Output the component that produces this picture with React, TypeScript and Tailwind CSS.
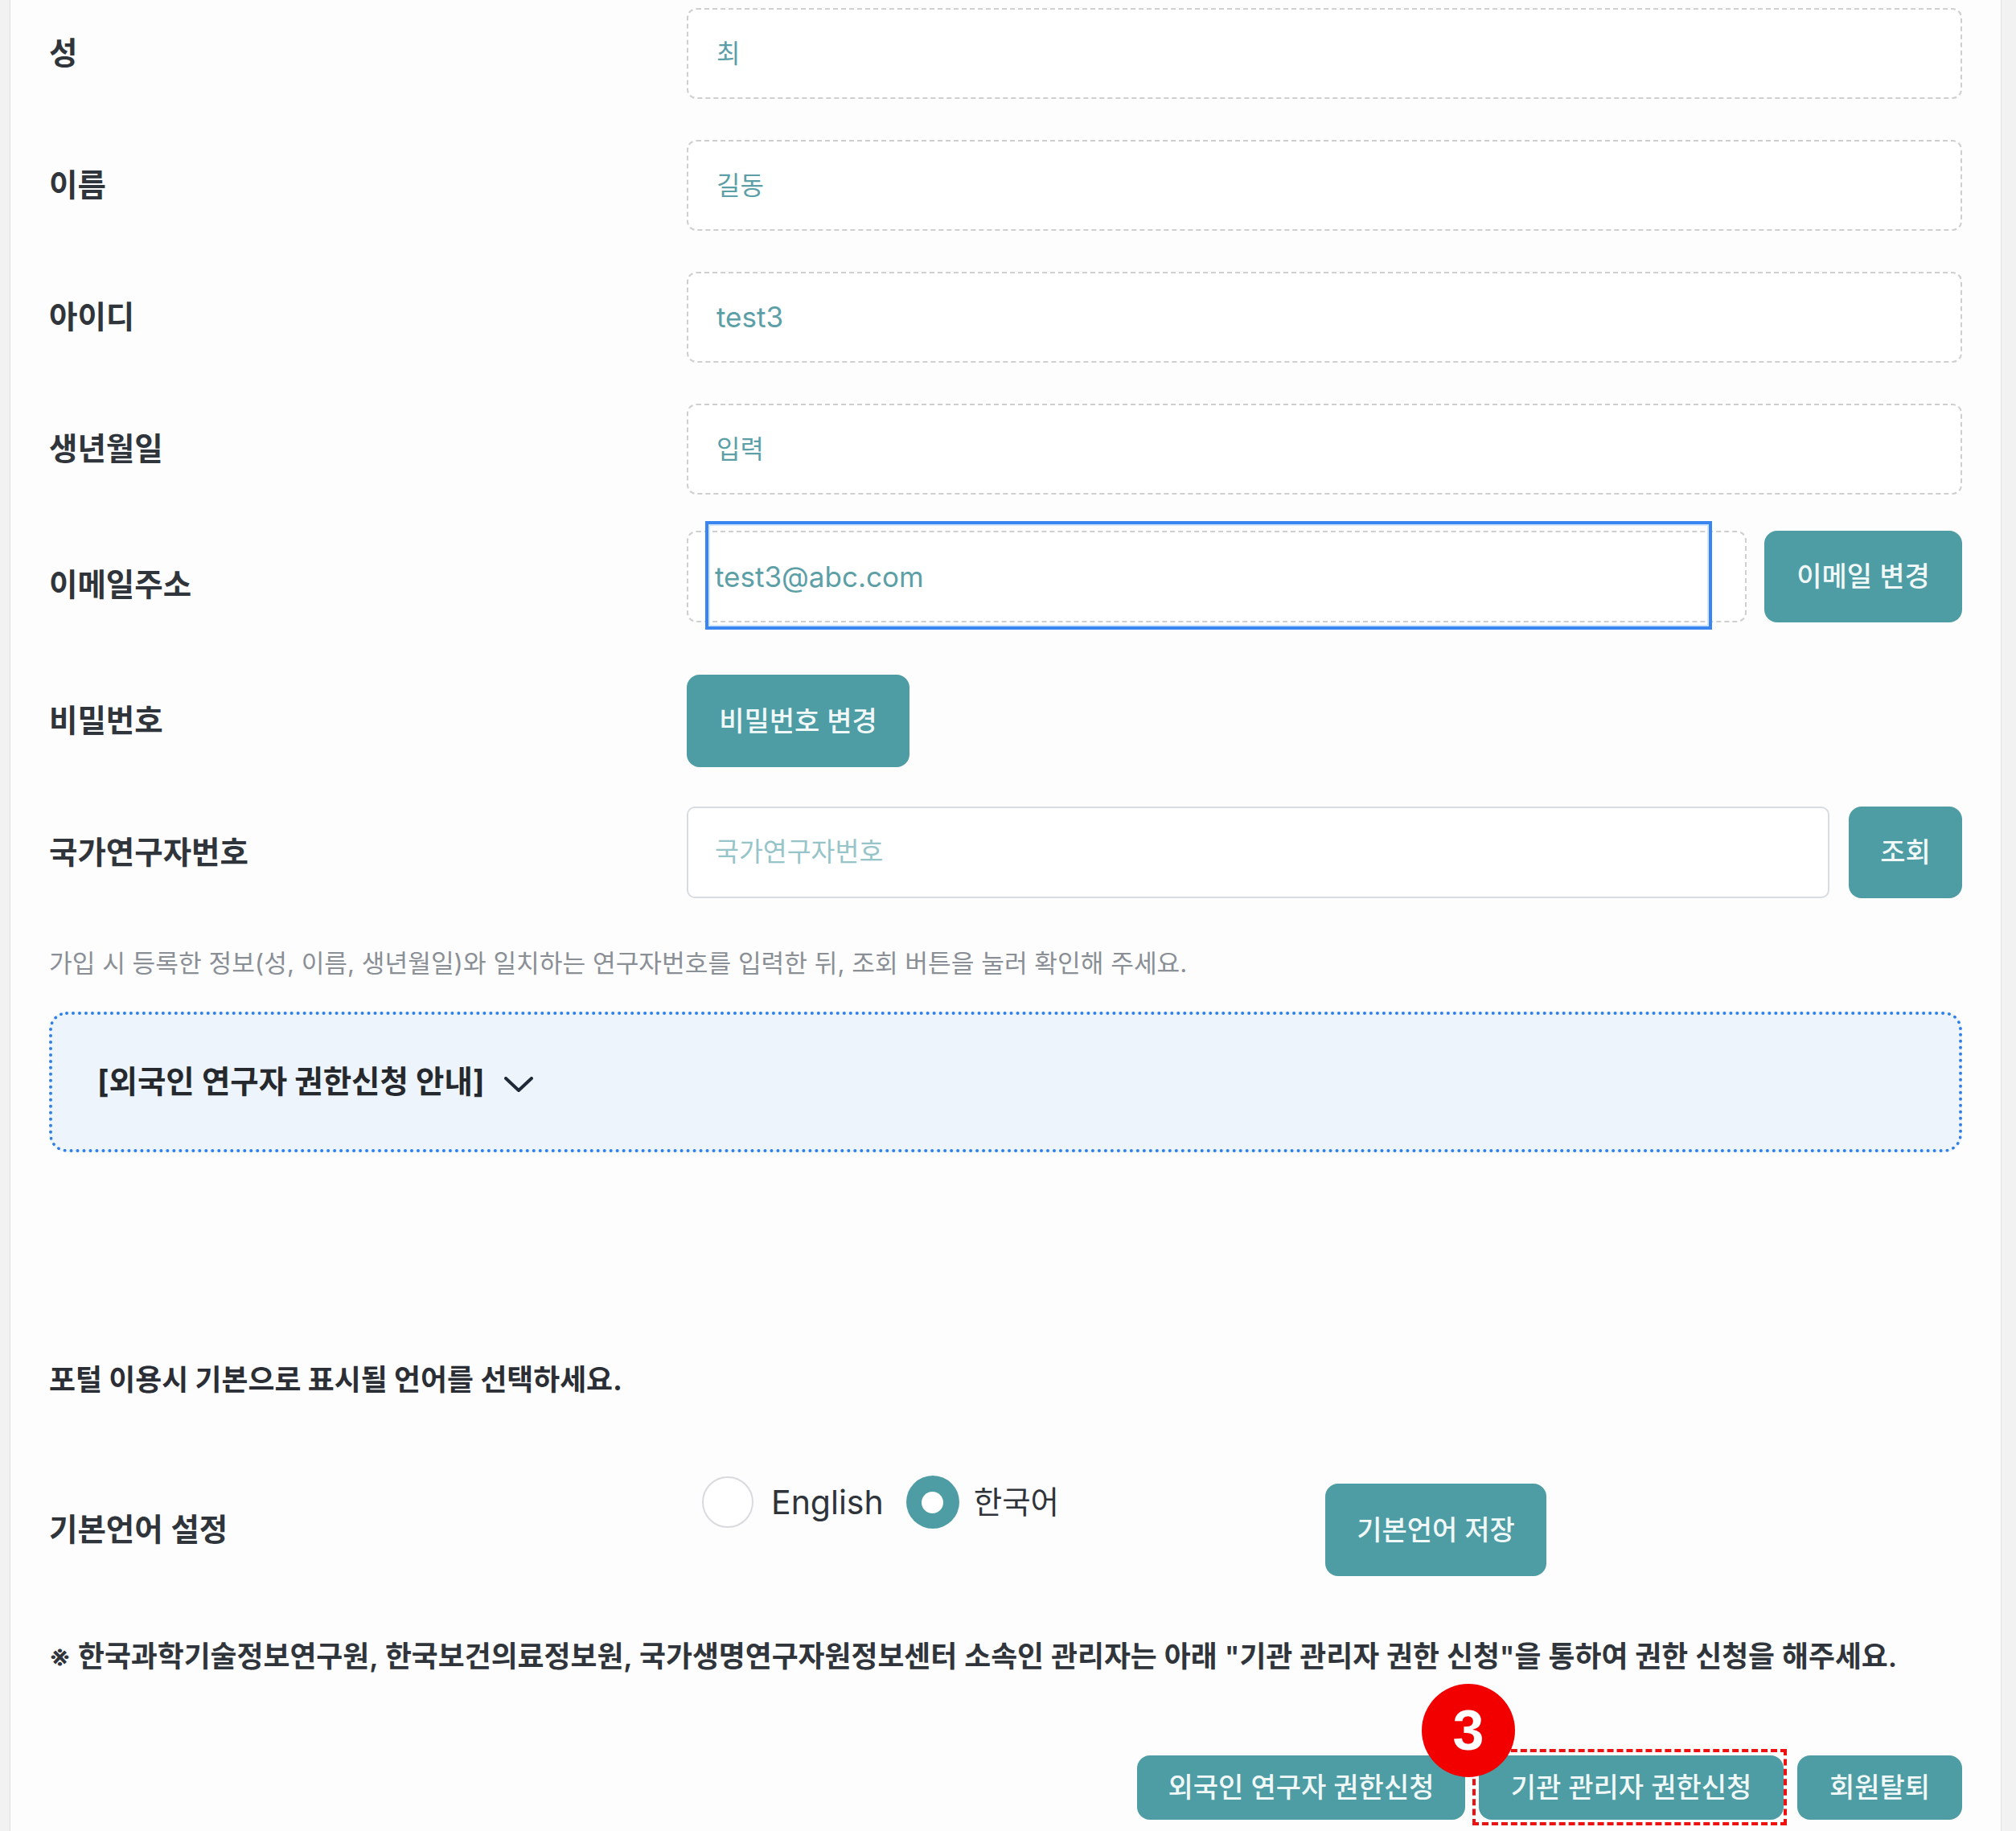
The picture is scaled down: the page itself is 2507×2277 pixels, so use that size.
import type { ReactNode } from 'react';
import clsx from 'clsx';

// Profile edit form: personal fields, NRN lookup, foreign researcher notice, language settings

function TealButton({ children, className }: { children: ReactNode; className?: string }) {
  return (
    <button
      type="button"
      className={clsx(
        'flex shrink-0 items-center justify-center rounded-[16px] bg-[#4e9ca4] text-[34px] font-medium leading-none text-[#f1f8f8]',
        className
      )}
    >
      {children}
    </button>
  );
}

function FieldRow({
  label,
  className,
  labelClassName,
  children,
}: {
  label: string;
  className?: string;
  labelClassName?: string;
  children: ReactNode;
}) {
  return (
    <div className={clsx('grid grid-cols-[793px_1fr] items-center', className)}>
      <div className={clsx('text-[38.5px] font-semibold leading-none text-[#30353b]', labelClassName)}>{label}</div>
      {children}
    </div>
  );
}

function ReadonlyField({ value, latin }: { value: string; latin?: boolean }) {
  return (
    <div className="flex h-[113px] items-center rounded-[12px] border-2 border-dashed border-[#cfcfcf] bg-white pl-[35px]">
      <span className={clsx('leading-none text-[#5d9fa6]', latin ? 'text-[35px]' : 'text-[32px]')}>{value}</span>
    </div>
  );
}

function Radio({ checked, label, latin }: { checked?: boolean; label: string; latin?: boolean }) {
  return (
    <label className={clsx('flex items-center', latin ? 'gap-[22px]' : 'gap-[18px]')}>
      {checked ? (
        <span className="flex h-[66px] w-[66px] items-center justify-center rounded-full bg-[#4e9ca4]">
          <span className="h-[27px] w-[27px] rounded-full bg-white" />
        </span>
      ) : (
        <span className="h-[64px] w-[64px] rounded-full border-2 border-[#d9dade] bg-white" />
      )}
      <span className={clsx('leading-none text-[#2f343a]', latin ? 'text-[41px]' : 'text-[38.5px]')}>{label}</span>
    </label>
  );
}

export default function App() {
  return (
    <div className="min-h-[2277px] w-full bg-[#f2f2f2] font-['Inter','Noto_Sans_CJK_KR',sans-serif]">
      <div className="ml-[12px] min-h-[2277px] w-[2477px] border-x border-[#e2e2e2] bg-[#fdfdfd] px-[48px] pt-[10px]">
        <FieldRow label="성" className="h-[113px]">
          <ReadonlyField value="최" />
        </FieldRow>
        <FieldRow label="이름" className="mt-[51px] h-[113px]">
          <ReadonlyField value="길동" />
        </FieldRow>
        <FieldRow label="아이디" className="mt-[51px] h-[113px]">
          <ReadonlyField value="test3" latin />
        </FieldRow>
        <FieldRow label="생년월일" className="mt-[51px] h-[113px]">
          <ReadonlyField value="입력" />
        </FieldRow>

        {/* email with focused inner box */}
        <FieldRow label="이메일주소" labelClassName="pt-[20px]" className="mt-[45px] h-[114px]">
          <div className="flex h-[114px] gap-[22px]">
            <div className="relative flex flex-1 items-center rounded-[12px] border-2 border-dashed border-[#cfcfcf] bg-white pl-[33px]">
              <div className="absolute -top-[14px] -bottom-[11px] left-[21px] right-[41px] border-[4px] border-[#3a86f0] shadow-[inset_0_0_0_2px_#d3e5fb]" />
              <span className="relative text-[35px] leading-none text-[#5d9fa6]">test3@abc.com</span>
            </div>
            <TealButton className="h-[114px] w-[246px]">이메일 변경</TealButton>
          </div>
        </FieldRow>

        <FieldRow label="비밀번호" className="mt-[65px] h-[115px]">
          <TealButton className="h-[115px] w-[277px]">비밀번호 변경</TealButton>
        </FieldRow>

        <FieldRow label="국가연구자번호" className="mt-[49px] h-[114px]">
          <div className="flex h-[114px] gap-[24px]">
            <div className="flex flex-1 items-center rounded-[10px] border-2 border-[#d8dce2] bg-white pl-[33px]">
              <span className="text-[32.5px] leading-none text-[#97c4c8]">국가연구자번호</span>
            </div>
            <TealButton className="h-[114px] w-[141px]">조회</TealButton>
          </div>
        </FieldRow>

        <p className="mt-[62px] h-[38px] text-[31.2px] leading-[38px] text-[#8a8f96]">
          가입 시 등록한 정보(성, 이름, 생년월일)와 일치하는 연구자번호를 입력한 뒤, 조회 버튼을 눌러 확인해 주세요.
        </p>

        {/* foreign researcher guide (collapsed) */}
        <div className="mt-[41px] flex h-[175px] items-center gap-[25px] rounded-[22px] border-[4px] border-dotted border-[#2f7fe8] bg-[#edf4fc] pl-[56px]">
          <span className="text-[38.5px] font-bold leading-none text-[#25292e]">[외국인 연구자 권한신청 안내]</span>
          <svg width="36" height="20" viewBox="0 0 36 20" fill="none" className="mt-[6px]">
            <polyline points="2,2 18,17 34,2" stroke="#1f2937" strokeWidth="4" strokeLinecap="round" strokeLinejoin="round" />
          </svg>
        </div>

        <p className="mt-[263px] h-[40px] text-[35.8px] font-bold leading-[40px] text-[#2b2f35]">
          포털 이용시 기본으로 표시될 언어를 선택하세요.
        </p>

        <div className="mt-[99px] flex items-start">
          <div className="mt-[10px] flex h-[115px] w-[793px] items-center text-[38.5px] font-semibold leading-none text-[#30353b]">
            기본언어 설정
          </div>
          <div className="flex h-[66px] w-[794px] items-center gap-[28px] pl-[19px]">
            <Radio label="English" latin />
            <Radio label="한국어" checked />
          </div>
          <TealButton className="mt-[10px] h-[115px] w-[275px]">기본언어 저장</TealButton>
        </div>

        <p className="mt-[80px] h-[40px] whitespace-nowrap text-[35.8px] font-semibold leading-[40px] text-[#30353b]">
          ※ 한국과학기술정보연구원, 한국보건의료정보원, 국가생명연구자원정보센터 소속인 관리자는 아래 "기관 관리자 권한 신청"을 통하여 권한 신청을 해주세요.
        </p>

        <div className="mt-[103px] flex justify-end gap-[17px]">
          <TealButton className="h-[80px] w-[408px]">외국인 연구자 권한신청</TealButton>
          <div className="relative">
            <TealButton className="h-[80px] w-[379px]">기관 관리자 권한신청</TealButton>
            <div className="pointer-events-none absolute -top-[8px] -bottom-[7px] -left-[8px] -right-[4px] border-[4px] border-dashed border-[#ee1111]" />
            <div className="absolute -top-[89px] -left-[71px] flex h-[116px] w-[116px] items-center justify-center rounded-full bg-[#f20000] font-['Liberation_Sans',sans-serif] text-[70px] font-bold leading-none text-white">
              3
            </div>
          </div>
          <TealButton className="h-[80px] w-[205px]">회원탈퇴</TealButton>
        </div>
      </div>
    </div>
  );
}
